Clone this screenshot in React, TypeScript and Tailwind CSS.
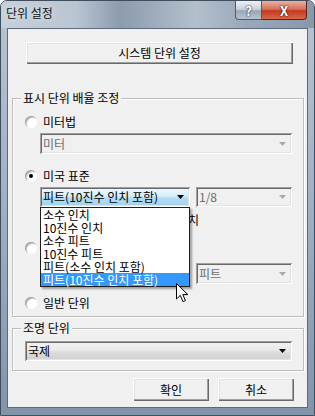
import React from 'react';

const FONT = "font-['Noto_Sans_CJK_KR','Noto_Sans',sans-serif]";

const UNITS = [
  '소수 인치',
  '10진수 인치',
  '소수 피트',
  '10진수 피트',
  '피트(소수 인치 포함)',
  '피트(10진수 인치 포함)',
];

function Arrow({ dim }: { dim?: boolean }) {
  return (
    <svg width="7" height="4" viewBox="0 0 7 4" className="shrink-0">
      <polygon points="0,0 7,0 3.5,4" fill={dim ? '#a9a9a9' : '#000'} />
    </svg>
  );
}

function Radio({ checked, label }: { checked?: boolean; label?: string }) {
  return (
    <div className="flex items-center h-[14px] ml-[12px]">
      <span className="w-[12px] h-[12px] rounded-full bg-white shadow-[inset_1px_1px_0_#a0a0a0,inset_-1px_-1px_0_#fff,inset_2px_2px_0_#d0d0d0] flex items-center justify-center">
        {checked && <span className="w-[4px] h-[4px] rounded-full bg-black" />}
      </span>
      {label && <span className="ml-[6px] leading-[14px]">{label}</span>}
    </div>
  );
}

// combobox: disabled / open (blue) / normal (gray)
function Combo({
  text,
  className,
  variant,
}: {
  text: string;
  className: string;
  variant: 'disabled' | 'open' | 'normal';
}) {
  const bg =
    variant === 'open'
      ? 'bg-[linear-gradient(to_bottom,#f2f9fe,#d9eefb_45%,#b3dcf5_55%,#9dd0f0)]'
      : variant === 'normal'
        ? 'bg-[linear-gradient(to_bottom,#f4f4f4,#e9e9e9_45%,#dcdcdc_55%,#cfcfcf)]'
        : 'bg-[#f0f0f0]';
  return (
    <div
      className={`${className} ${bg} flex items-center justify-between pl-[3px] pr-[6px] shadow-[inset_1px_1px_0_#a0a0a0,inset_-1px_-1px_0_#fff,inset_2px_2px_0_#696969,inset_-2px_-2px_0_#e3e3e3]`}
    >
      <span
        className={`leading-[14px] whitespace-nowrap ${variant === 'disabled' ? 'text-[#6d6d6d]' : 'text-black'}`}
      >
        {text}
      </span>
      <Arrow dim={variant === 'disabled'} />
    </div>
  );
}

function Group({
  label,
  className,
  children,
}: {
  label: string;
  className: string;
  children: React.ReactNode;
}) {
  return (
    <div className={`${className} border border-[#bdbdbd] shadow-[inset_1px_1px_0_#fff,1px_1px_0_#fff]`}>
      <div className="-mt-[8px] ml-[8px] px-[2px] w-fit bg-[#f0f0f0] leading-[14px]">{label}</div>
      {children}
    </div>
  );
}

function Btn({ label, className }: { label: string; className: string }) {
  return (
    <div
      className={`${className} flex items-center justify-center bg-[#f0f0f0] shadow-[inset_1px_1px_0_#fff,inset_-1px_-1px_0_#696969,inset_-2px_-2px_0_#a0a0a0,inset_2px_2px_0_#e3e3e3]`}
    >
      <span className="leading-[14px]">{label}</span>
    </div>
  );
}

function Cursor() {
  return (
    <svg width="13" height="20" viewBox="0 0 13 20" className="absolute left-[168px] top-[254px]">
      <path
        d="M0.5 0.5 L0.5 16 L4.3 12.4 L7 18.6 L9.4 17.6 L6.8 11.6 L11.8 11.6 Z"
        fill="#fff"
        stroke="#000"
        strokeWidth="1"
        strokeLinejoin="miter"
      />
    </svg>
  );
}

export default function App() {
  return (
    <div
      className={`${FONT} text-[12px] text-black w-[315px] h-[416px] overflow-hidden rounded-t-[7px] border border-[#3f4d5d] bg-[linear-gradient(to_bottom,#b8c5d2,#9eb0c3_50%,#8294aa)]`}
    >
      {/* Title bar */}
      <div className="h-[27px] flex items-start justify-between bg-[linear-gradient(90deg,#c6d0da_0%,#b9c5d1_24%,#8c9cae_38%,#9fadbc_50%,#b3bfcb_62%,#9aa9b9_78%,#8898ab_100%)]">
        <div className="pl-[5px] pt-[5px] leading-[14px] text-[#111] [text-shadow:0_0_6px_rgba(255,255,255,0.9)]">
          단위 설정
        </div>
        <div className="flex mr-[7px] h-[19px]">
          <div className="w-[27px] h-full rounded-bl-[4px] border border-[#4f5b69] border-t-0 bg-[linear-gradient(to_bottom,#eef1f4,#c9d2db_45%,#9aa8b6_55%,#b7c3cf)] flex items-center justify-center text-white font-bold text-[13px] leading-none [text-shadow:0_0_2px_#2b3440,0_0_1px_#2b3440]">
            ?
          </div>
          <div className="w-[45px] h-full rounded-br-[4px] border border-[#5c2218] border-t-0 border-l-0 bg-[linear-gradient(to_bottom,#eab1a2,#d8705a_45%,#c3391f_55%,#d8684a)] flex items-center justify-center text-white font-bold text-[13px] leading-none [text-shadow:0_0_2px_#3a1208,0_0_1px_#3a1208]">
            X
          </div>
        </div>
      </div>

      {/* Client area */}
      <div className="relative ml-[6px] w-[301px] h-[380px] border border-[#5b6b7d] bg-[#f0f0f0] flex flex-col">
        <Btn label="시스템 단위 설정" className="mt-[13px] ml-[18px] w-[267px] h-[22px]" />

        <Group label="표시 단위 배율 조정" className="mt-[34px] ml-[4px] w-[292px] h-[219px] flex flex-col">
          <div className="mt-[10px]">
            <Radio label="미터법" />
          </div>
          <Combo text="미터" variant="disabled" className="mt-[4px] ml-[27px] w-[252px] h-[21px]" />
          <div className="mt-[15px]">
            <Radio checked label="미국 표준" />
          </div>
          <div className="mt-[4px] ml-[27px] flex gap-[6px]">
            <Combo text="피트(10진수 인치 포함)" variant="open" className="w-[150px] h-[20px]" />
            <Combo text="1/8" variant="disabled" className="w-[96px] h-[20px]" />
          </div>
          {/* label mostly hidden behind the open list */}
          <div className="mt-[6px] w-[186px] flex justify-end leading-[14px]">치</div>
          <div className="mt-[14px]">
            <Radio />
          </div>
          <div className="mt-[8px] ml-[27px] flex gap-[6px]">
            <Combo text="" variant="disabled" className="w-[150px] h-[21px]" />
            <Combo text="피트" variant="disabled" className="w-[96px] h-[21px]" />
          </div>
          <div className="mt-[12px]">
            <Radio label="일반 단위" />
          </div>
        </Group>

        <Group label="조명 단위" className="mt-[11px] ml-[4px] w-[292px] h-[43px] flex flex-col">
          <Combo text="국제" variant="normal" className="mt-[6px] ml-[12px] w-[267px] h-[20px]" />
        </Group>

        <div className="mt-[7px] flex justify-end gap-[9px] pr-[13px]">
          <Btn label="확인" className="w-[76px] h-[23px]" />
          <Btn label="취소" className="w-[76px] h-[23px]" />
        </div>

        {/* open dropdown list */}
        <div className="absolute left-[32px] top-[178px] w-[150px] border border-[#1e1e1e] bg-white shadow-[2px_2px_2px_rgba(0,0,0,0.35)]">
          {UNITS.map((u, i) => (
            <div
              key={u}
              className={`h-[13px] leading-[13px] pl-[2px] whitespace-nowrap ${
                i === UNITS.length - 1 ? 'bg-[#3399ff] text-white' : 'text-black'
              }`}
            >
              {u}
            </div>
          ))}
        </div>

        <Cursor />
      </div>
    </div>
  );
}
